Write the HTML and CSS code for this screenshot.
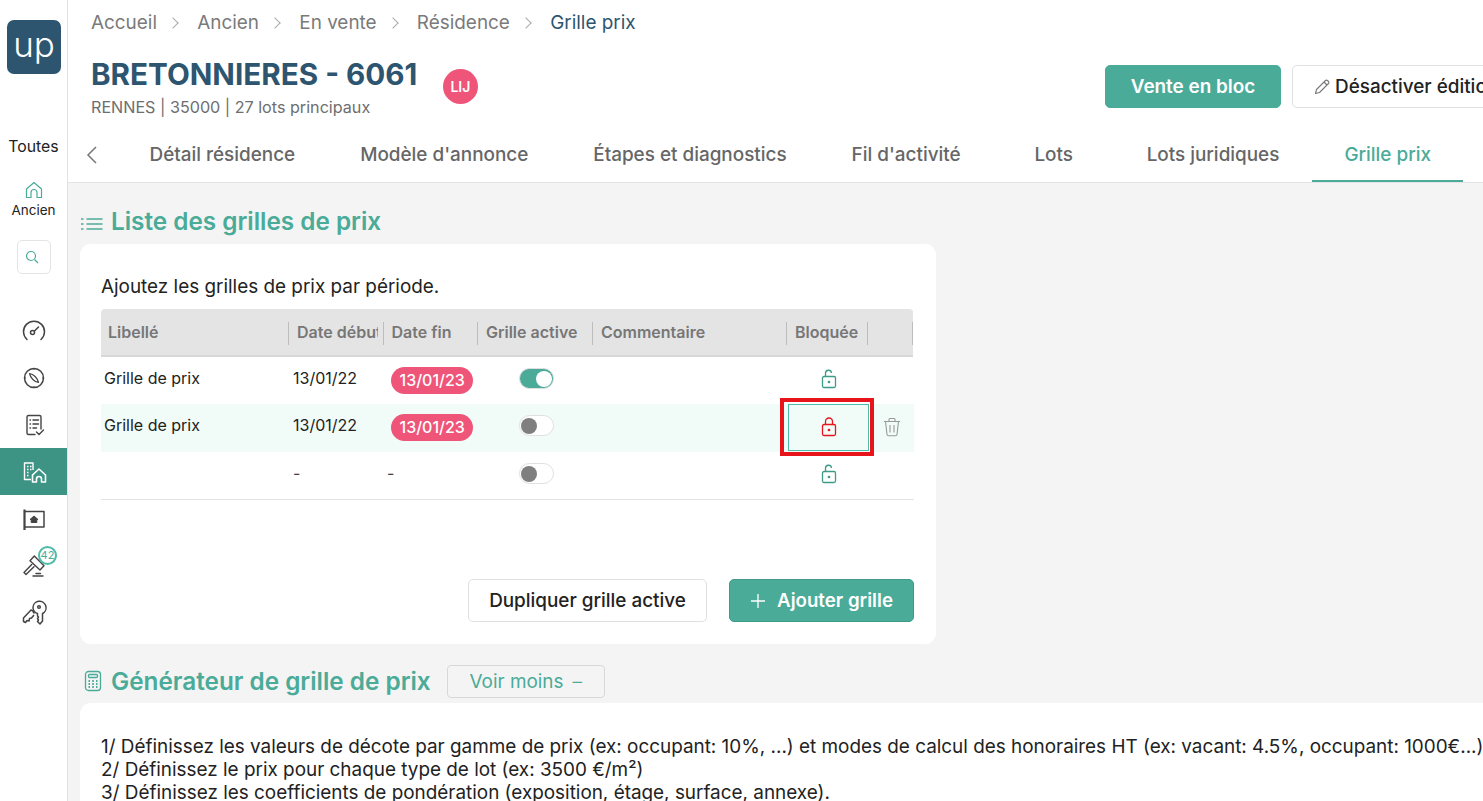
FILE: index.html
```html
<!DOCTYPE html>
<html lang="fr">
<head>
<meta charset="utf-8">
<title>Grille prix</title>
<link rel="stylesheet" href="styles.css">
</head>
<body>
<div class="app">
  <aside class="sidebar">
    <div class="logo">up</div>
    <div class="scope">Toutes</div>
    <div class="scope-item">
      <svg class="home" width="20" height="20" viewBox="0 0 20 20" fill="none" stroke="#4aab98" stroke-width="1.2" stroke-linejoin="round"><path d="M2.5 9 10 2.5 17.500 9v8.500h-4.500v-5a3 3 0 0 0-6 0v5H2.500z"/></svg>
      <span>Ancien</span>
    </div>
    <div class="search">
      <svg class="search-icon" width="14" height="14" viewBox="0 0 14 14" fill="none" stroke="#4aab98" stroke-width="1.2"><circle cx="6" cy="6" r="4.500"/><path d="m9.500 9.500 3.500 3.500"/></svg>
    </div>
    <nav class="nav">
      <div class="nav-item">
        <svg width="26" height="26" viewBox="0 0 26 26" fill="none" stroke="#444" stroke-width="1.500" stroke-linecap="round"><path d="M6 21.500A10.500 10.500 0 1 1 20 21.500"/><circle cx="11.500" cy="14.500" r="2"/><path d="m13.500 13 4-4"/></svg>
      </div>
      <div class="nav-item">
        <svg width="26" height="26" viewBox="0 0 26 26" fill="none" stroke="#444" stroke-width="1.500" stroke-linejoin="round"><circle cx="13" cy="13" r="9.500"/><path d="M8.500 8.500c4 .5 8 4.500 9 9-4-.5-8-4.500-9-9z" stroke-width="1.200"/><path d="M13 3.500v1.500M13 21v1.500M3.500 13H5M21 13h1.500" stroke-width="1"/></svg>
      </div>
      <div class="nav-item">
        <svg width="26" height="26" viewBox="0 0 26 26" fill="none" stroke="#444" stroke-width="1.400" stroke-linecap="round" stroke-linejoin="round"><path d="M14 22.500H7.500a1.500 1.500 0 0 1-1.500-1.500V5a1.500 1.500 0 0 1 1.500-1.500h11A1.500 1.500 0 0 1 20 5v12"/><path d="M9 8h.5M12 8h5.500M9 12h.5M12 12h5.500M9 16h.5M12 16h3.500"/><path d="m15.500 20 2.500 2.500 4.500-4.500"/></svg>
      </div>
      <div class="nav-item active">
        <svg width="26" height="26" viewBox="0 0 26 26" fill="none" stroke="#fff" stroke-width="1.400" stroke-linejoin="round"><path d="M10 20.500H3.500V4H12v7"/><path d="M6 7.500h1.500M9 7.500h1.500M6 10.500h1.500M9 10.500h1.500M6 13.500h1.500M6 16.500h1.500" stroke-width="1.500"/><path d="m11.500 16 6.500-6 6.500 6v7h-4v-3a2.500 2.500 0 0 0-5 0v3h-4z" stroke-width="1.600"/></svg>
      </div>
      <div class="nav-item">
        <svg width="26" height="26" viewBox="0 0 26 26" fill="none" stroke="#444" stroke-width="1.500" stroke-linejoin="round"><path d="M3.500 24V3.500" stroke-width="2.200"/><path d="M3.500 5.500h19.500v15.500H3.500" stroke-width="1.500"/><path d="m9 13.500 4-3.500 4 3.500h-1.200v3h-5.600v-3z" fill="#444" stroke-width="1"/></svg>
      </div>
      <div class="nav-item">
        <svg width="26" height="26" viewBox="0 0 26 26" fill="none" stroke="#444" stroke-width="1.400" stroke-linejoin="round" stroke-linecap="round"><path d="m13.300 3 9.700 9.700-4 4.300-10-9.300z"/><path d="M10.700 11.500 3 19.500l2 2 8-7.800"/><path d="M12 23h10M15 20.500h4.500"/></svg>
        <span class="count">42</span>
      </div>
      <div class="nav-item">
        <svg width="26" height="26" viewBox="0 0 26 26" fill="none" stroke="#444" stroke-width="1.500" stroke-linejoin="round"><path d="M13.500 13.500c-1-1-1.500-1.500-1.500-2.500l-2-1L2.500 18v3.500l2 1 1.500-2 2 .5.500-2.500 2-.5 2.500-3"/><path d="M12 8a6.500 6.500 0 1 1 9.500 5.500V21l-2.500 3-2.500-2.500 1-1.500-1-1.500 1-1.500-1-1v-2.500A6.500 6.500 0 0 1 12 8z"/><circle cx="18" cy="7" r="1.300"/></svg>
      </div>
    </nav>
  </aside>

  <main class="main">
    <header class="top">
      <div class="crumbs">
        <span>Accueil</span><i class="sep"></i>
        <span>Ancien</span><i class="sep"></i>
        <span>En vente</span><i class="sep"></i>
        <span>Résidence</span><i class="sep"></i>
        <span class="current">Grille prix</span>
      </div>
      <div class="title-row">
        <div class="title-block">
          <h1>BRETONNIERES - 6061</h1>
          <p>RENNES | 35000 | 27 lots principaux</p>
        </div>
        <div class="avatar">LIJ</div>
        <div class="actions">
          <button class="btn primary head-primary">Vente en bloc</button>
          <button class="btn outline head-outline">
            <svg width="18" height="18" viewBox="0 0 18 18" fill="none" stroke="#777" stroke-width="1.100" stroke-linejoin="round"><path d="m2.500 15.500 1-4L12.500 2.500a1.400 1.400 0 0 1 2 0l1 1a1.400 1.400 0 0 1 0 2L6.500 14.500z"/><path d="m11 4 3 3"/></svg>
            Désactiver édition
          </button>
        </div>
      </div>
      <div class="tabs">
        <svg class="back" width="14" height="20" viewBox="0 0 14 20" fill="none" stroke="#777" stroke-width="1.500"><path d="M11 2 3 10l8 8"/></svg>
        <div class="tab">Détail résidence</div>
        <div class="tab">Modèle d'annonce</div>
        <div class="tab">Étapes et diagnostics</div>
        <div class="tab">Fil d'activité</div>
        <div class="tab">Lots</div>
        <div class="tab">Lots juridiques</div>
        <div class="tab selected">Grille prix</div>
      </div>
    </header>

    <section class="content">
      <h2 class="section-title list-title">
        <svg class="list-icon" width="24" height="16" viewBox="0 0 24 16" fill="none" stroke="#4aab98" stroke-width="1.400"><path d="M6.500 3h16M6.500 8h16M6.500 13h16"/><path d="M1 3h3M1 8h3M1 13h3" stroke-dasharray="2.500 1"/></svg>
        Liste des grilles de prix
      </h2>
      <div class="card grid-card">
        <p class="intro">Ajoutez les grilles de prix par période.</p>
        <div class="table">
          <div class="thead">
            <div class="th"><span>Libellé</span></div>
            <div class="th"><span class="clip">Date début</span></div>
            <div class="th"><span>Date fin</span></div>
            <div class="th"><span>Grille active</span></div>
            <div class="th"><span>Commentaire</span></div>
            <div class="th"><span>Bloquée</span></div>
            <div class="th"></div>
          </div>
          <div class="tr">
            <div class="td">Grille de prix</div>
            <div class="td date">13/01/22</div>
            <div class="td pill-cell"><span class="pill">13/01/23</span></div>
            <div class="td"><span class="switch on"></span></div>
            <div class="td"></div>
            <div class="td center lock-cell">
              <svg class="lock" width="16" height="20" viewBox="0 0 16 20" fill="none" stroke="#3f9a88" stroke-width="1.300"><rect x="1.500" y="7.500" width="13" height="11" rx="1.500"/><path d="M4.500 7.500V4.500a3 3 0 0 1 6-.5"/><circle cx="8" cy="13" r=".7" fill="#3f9a88"/></svg>
            </div>
            <div class="td"></div>
          </div>
          <div class="tr hl">
            <div class="td">Grille de prix</div>
            <div class="td date">13/01/22</div>
            <div class="td pill-cell"><span class="pill">13/01/23</span></div>
            <div class="td"><span class="switch"></span></div>
            <div class="td"></div>
            <div class="td center focused">
              <svg class="lock" width="16" height="20" viewBox="0 0 16 20" fill="none" stroke="#e8141c" stroke-width="1.300"><rect x="1.500" y="7.500" width="13" height="11" rx="1.500"/><path d="M4.500 7.500V4.500a3.500 3.500 0 0 1 7 0v3"/><circle cx="8" cy="13" r=".7" fill="#e8141c"/></svg>
              <span class="annot"></span>
            </div>
            <div class="td center trash">
              <svg width="18" height="20" viewBox="0 0 18 20" fill="none" stroke="#999" stroke-width="1.100" stroke-linejoin="round"><path d="M1 4.500h16M6 4.500V2.500a1 1 0 0 1 1-1h4a1 1 0 0 1 1 1v2M2.500 4.500l1.500 13a1.500 1.500 0 0 0 1.500 1.300h7a1.500 1.500 0 0 0 1.500-1.300l1.500-13M7 8v7.500M11 8v7.500"/></svg>
            </div>
          </div>
          <div class="tr last">
            <div class="td"></div>
            <div class="td date dash">-</div>
            <div class="td dash2">-</div>
            <div class="td"><span class="switch"></span></div>
            <div class="td"></div>
            <div class="td center lock-cell">
              <svg class="lock" width="16" height="20" viewBox="0 0 16 20" fill="none" stroke="#3f9a88" stroke-width="1.300"><rect x="1.500" y="7.500" width="13" height="11" rx="1.500"/><path d="M4.500 7.500V4.500a3 3 0 0 1 6-.5"/><circle cx="8" cy="13" r=".7" fill="#3f9a88"/></svg>
            </div>
            <div class="td"></div>
          </div>
        </div>
        <div class="card-actions">
          <button class="btn outline dup">Dupliquer grille active</button>
          <button class="btn primary add">
            <svg class="plus" width="16" height="16" viewBox="0 0 16 16" fill="none" stroke="#fff" stroke-width="1.300"><path d="M8 1v14M1 8h14"/></svg>
            Ajouter grille
          </button>
        </div>
      </div>

      <div class="gen-head">
        <h2 class="section-title gen-title">
          <svg width="18" height="22" viewBox="0 0 18 22" fill="none" stroke="#4aab98" stroke-width="1.300"><rect x="1.500" y="1.500" width="15" height="19" rx="3"/><rect x="4.500" y="4.500" width="9" height="3" rx="1"/><path d="M4.500 11h1.500M8.200 11h1.600M12 11h1.500M4.500 14h1.500M8.200 14h1.600M12 14h1.500M4.500 17h1.500M8.200 17h1.600M12 17h1.500" stroke-width="1.800"/></svg>
          Générateur de grille de prix
        </h2>
        <button class="toggle">Voir moins<span class="toggle-dash">–</span></button>
      </div>
      <div class="card gen-card">
        <p>1/ Définissez les valeurs de décote par gamme de prix (ex: occupant: 10%, ...) et modes de calcul des honoraires HT (ex: vacant: 4.5%, occupant: 1000€...)</p>
        <p>2/ Définissez le prix pour chaque type de lot (ex: 3500 €/m²)</p>
        <p>3/ Définissez les coefficients de pondération (exposition, étage, surface, annexe).</p>
      </div>
    </section>
  </main>
</div>
</body>
</html>
```
FILE: styles.css
```css
* { box-sizing: border-box; }
html, body { margin: 0; height: 100%; overflow: hidden; }
body { font-family: Inter, "Liberation Sans", sans-serif; color: #222; background: #f4f4f4; }
.app { display: flex; height: 801px; width: 1483px; overflow: hidden; }

.sidebar { width: 68px; flex: none; background: #fff; border-right: 1px solid #e2e2e2; display: flex; flex-direction: column; align-items: center; padding-top: 20px; }
.logo { width: 54px; height: 54px; margin-left: 1px; border-radius: 7px; background: #2d5570; color: #fff; font-size: 35px; font-weight: 300; text-align: center; line-height: 48px; }
.scope { margin-top: 63px; font-size: 15.800px; line-height: 20px; color: #222; }
.scope-item { margin-top: 23px; display: flex; flex-direction: column; align-items: center; font-size: 13.500px; line-height: 17px; }
.scope-item .home { display: block; margin-bottom: 2px; }
.search { margin-top: 21px; width: 34px; height: 34px; border: 1px solid #e4e4e4; border-radius: 5px; display: flex; align-items: center; justify-content: center; }
.search-icon { margin-right: 3px; }
.nav { margin-top: 33px; width: 67px; align-self: flex-start; }
.nav-item { height: 47px; display: flex; align-items: center; justify-content: center; position: relative; }
.nav-item.active { background: #3d9484; }
.count { position: absolute; left: 38px; top: 4px; width: 19px; height: 19px; border-radius: 50%; border: 2px solid #4fbcaa; background: #fff; color: #4aab98; font-size: 11px; line-height: 15px; text-align: center; }

.main { flex: 1; min-width: 0; display: flex; flex-direction: column; }
.top { background: #fff; height: 183px; border-bottom: 1px solid #e4e4e8; flex: none; padding-left: 23px; }
.crumbs { height: 45px; display: flex; align-items: center; font-size: 18.900px; color: #7a7a7a; }
.crumbs .current { color: #2d5570; }
.sep { width: 8px; height: 8px; margin: 0 20.300px 0 12px; border-top: 1.300px solid #aaa; border-right: 1.300px solid #aaa; transform: rotate(45deg); }
.title-row { display: flex; align-items: flex-start; height: 70px; margin-right: -33px; }
.title-block h1 { margin: 9px 0 1px; font-size: 29.650px; line-height: 40px; font-weight: 700; color: #2d5570; white-space: nowrap; }
.title-block p { margin: 0; font-size: 16.150px; line-height: 24px; color: #6e6e6e; white-space: nowrap; }
.avatar { width: 35px; height: 35px; margin: 24px 0 0 25.500px; border-radius: 50%; background: #ef5479; color: #fff; font-size: 14px; font-weight: 600; display: flex; align-items: center; justify-content: center; }
.actions { margin-left: auto; margin-top: 20px; display: flex; gap: 11px; }
.btn { font-family: inherit; border-radius: 5px; height: 43px; font-size: 18.900px; cursor: pointer; display: inline-flex; align-items: center; justify-content: center; white-space: nowrap; }
.btn.primary { background: #4aab98; border: 1px solid #4aab98; color: #fff; font-weight: 600; }
.btn.outline { background: #fff; border: 1px solid #e0e0e0; color: #222; font-weight: 500; }
.head-primary { width: 176px; }
.head-outline { width: 224px; gap: 4px; justify-content: flex-start; padding-left: 20px; }
.tabs { display: flex; height: 68px; margin-top: -1px; align-items: stretch; position: relative; }
.back { position: absolute; left: -6px; top: 31px; }
.tab { padding: 0 32.500px; min-width: 121px; font-size: 18.900px; color: #666; line-height: 82px; height: 68px; text-align: center; white-space: nowrap; font-weight: 500; }
.tab:first-of-type { margin-left: 26px; }
.tab.selected { color: #4aab98; border-bottom: 2px solid #4aab98; }

.content { flex: 1; padding: 0 0 0 12px; overflow: hidden; }
.section-title { margin: 0; display: flex; align-items: center; gap: 7px; font-size: 24.300px; font-weight: 600; color: #4aab98; white-space: nowrap; }
.section-title svg { flex: none; }
.list-title { height: 61px; padding-top: 15px; }
.list-icon { margin-top: 5px; }
.card { background: #fff; border-radius: 11px; }
.grid-card { width: 856px; height: 400px; padding: 30px 22px 0 21px; display: flex; flex-direction: column; }
.intro { margin: 0; font-size: 18.900px; line-height: 26px; color: #222; height: 35px; }
.table { width: 813px; font-size: 16px; }
.thead, .tr { display: grid; grid-template-columns: 187px 94.500px 94.500px 115px 194px 81px 47px; }
.thead { height: 48px; background: #e4e4e4; border-bottom: 2px solid #d8d8d8; border-radius: 4px 4px 0 0; width: 812px; overflow: hidden; }
.th { display: flex; align-items: center; padding-left: 7px; font-size: 16px; font-weight: 600; color: #777; white-space: nowrap; overflow: hidden; position: relative; }
.th + .th { border-left: 1px solid #bdbdbd; padding-left: 8px; border-image: linear-gradient(#e4e4e4 13px, #bdbdbd 13px, #bdbdbd 35px, #e4e4e4 35px) 1; }
.th span { display: block; overflow: hidden; }
.th span.clip { max-width: 81px; }
.th:last-child { border-right: 2px solid #bdbdbd; border-image: linear-gradient(#e4e4e4 13px, #bdbdbd 13px, #bdbdbd 35px, #e4e4e4 35px) 1; }
.tr { height: 47.330px; align-items: stretch; }
.tr.hl { background: #f1fbf8; }
.tr.last { height: 48.330px; padding-top: 1px; border-bottom: 1px solid #e4e4e4; }
.td { display: flex; align-items: center; padding: 0 0 5px 3px; font-size: 16px; color: #222; white-space: nowrap; }
.td.date { padding-left: 5px; }
.td.pill-cell { padding-bottom: 0; }
.td.center { justify-content: center; padding: 0; }
.td.lock-cell { padding: 0 0 4px 4px; }
.td.trash { padding: 0 0 1px 3px; }
.td.dash { padding-left: 5px; color: #444; }
.dash2 { padding-left: 4.500px; color: #444; }
.pill { margin-left: 5.500px; background: #ef5479; color: #fff; border-radius: 14px; height: 27px; line-height: 27px; padding: 0 8.500px; font-size: 16px; font-weight: 500; }
.switch { display: block; width: 35px; height: 21px; margin-left: 39px; border-radius: 11px; background: #fff; border: 1px solid #e0e0e0; position: relative; }
.switch::after { content: ""; position: absolute; left: 1px; top: 2px; width: 16px; height: 16px; border-radius: 50%; background: #7f7f7f; }
.switch.on { background: #4aab98; }
.switch.on::after { left: auto; right: 1px; background: #fff; }
.td.focused { position: relative; border: 1px solid #4fbcaa; margin: 0 -2px 1px 2px; padding-bottom: 1px; }
.annot { position: absolute; left: -9px; top: -7px; width: 94px; height: 58px; border: 4px solid #e8141c; }
.card-actions { display: flex; justify-content: flex-end; gap: 22px; margin-top: 79px; width: 813px; }
.dup { width: 239px; }
.add { width: 185px; gap: 11px; font-size: 18.700px !important; border-color: #3f9a88 !important; }
.plus { margin-top: 2px; }

.gen-head { display: flex; align-items: center; height: 59px; padding-top: 15px; }
.gen-title { gap: 9px; padding-left: 4px; }
.toggle { font-family: inherit; margin-left: 16px; width: 158px; height: 33px; background: #f4f4f4; border: 1px solid #d8d8d8; border-radius: 4px; color: #4aab98; font-size: 18.900px; }
.toggle-dash { margin-left: 9px; font-weight: 300; }
.gen-card { width: 1500px; height: 200px; padding: 32px 21px; }
.gen-card p { margin: 0; font-size: 18.900px; line-height: 23px; color: #222; white-space: nowrap; }
```
